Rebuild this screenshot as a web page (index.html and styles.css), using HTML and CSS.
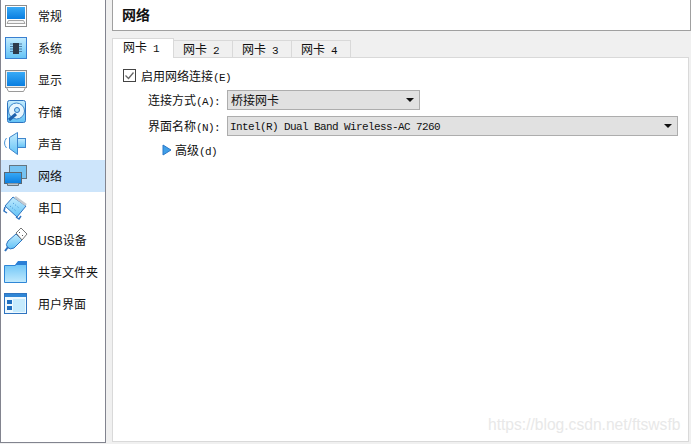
FILE: index.html
```html
<!DOCTYPE html>
<html lang="en">
<head>
    <meta charset="UTF-8">
    <title>网络</title>
    <link rel="stylesheet" href="styles.css">
</head>
<body>
<ul class="side">
    <li>
        <svg class="ico" viewBox="1 0 30 32">
            <defs>
                <linearGradient id="scr" x1="0" y1="0" x2="0" y2="1"><stop offset="0" stop-color="#38aaf6"/><stop offset="1" stop-color="#0a7ee0"/></linearGradient>
                <linearGradient id="lit" x1="0" y1="0" x2="0" y2="1"><stop offset="0" stop-color="#c4ecfe"/><stop offset="1" stop-color="#62c2f6"/></linearGradient>
                <linearGradient id="fold" x1="0" y1="0" x2="0" y2="1"><stop offset="0" stop-color="#62c0f6"/><stop offset="1" stop-color="#c2eafd"/></linearGradient>
            </defs>
            <rect x="5.500" y="5.500" width="21" height="21" fill="#fff" stroke="#8c8c8c"/>
            <rect x="7" y="7" width="18" height="12" fill="url(#scr)"/>
            <path d="M8.500 20.500h15l1.500 3H7z" fill="#f4f4f4" stroke="#a5a5a5"/>
        </svg>
        <span>常规</span>
    </li>
    <li>
        <svg class="ico" viewBox="1 0 30 32">
            <rect x="5.500" y="5.500" width="21" height="21" fill="url(#lit)" stroke="#3a7fd0"/>
            <rect x="13" y="11" width="6" height="11" fill="#2e3a4a"/>
            <path d="M10 12h3M10 14.500h3M10 17h3M10 19.500h3M19 12h3M19 14.500h3M19 17h3M19 19.500h3" stroke="#4a7ba5"/>
        </svg>
        <span>系统</span>
    </li>
    <li>
        <svg class="ico" viewBox="1 0 30 32">
            <rect x="5.500" y="6.500" width="21" height="17" fill="#eee" stroke="#8c8c8c"/>
            <rect x="7" y="8" width="18" height="14" fill="url(#scr)"/>
            <path d="M6.500 23.500h19l-2 4h-15z" fill="#fff" stroke="#9a9a9a"/>
        </svg>
        <span>显示</span>
    </li>
    <li>
        <svg class="ico" viewBox="1 0 30 32">
            <rect x="7.500" y="4.500" width="18" height="22" rx="2" fill="url(#lit)" stroke="#2f74c0"/>
            <circle cx="16.500" cy="15" r="8" fill="#e6f5fd" stroke="#3a86cc"/>
            <circle cx="17" cy="14" r="2.500" fill="#a5dcf8" stroke="#2f74c0"/>
            <path d="M9 24l7-6" stroke="#1f62ad" stroke-width="3"/>
        </svg>
        <span>存储</span>
    </li>
    <li>
        <svg class="ico" viewBox="1 0 30 32">
            <path d="M9.500 9.500l8-5v22l-8-6z" fill="url(#lit)" stroke="#3f86cc"/>
            <rect x="17.500" y="10.500" width="8" height="9" fill="url(#lit)" stroke="#3f86cc"/>
            <path d="M6.500 10q-4 5 0 10" fill="none" stroke="#4a94d6"/>
        </svg>
        <span>声音</span>
    </li>
    <li class="on">
        <svg class="ico" viewBox="1 0 30 32">
            <rect x="9.500" y="5.500" width="17" height="13" fill="#76c3f2" stroke="#66757f"/>
            <rect x="4.500" y="12.500" width="17" height="11" fill="url(#scr)" stroke="#5a6874"/>
            <path d="M7.500 23.500v2h11v-2" fill="#b8c6d0" stroke="#66757f"/>
        </svg>
        <span>网络</span>
    </li>
    <li>
        <svg class="ico" viewBox="1 0 30 32">
            <path d="M5 14L13 5l13 9-9 11z" fill="url(#lit)" stroke="#2f74c0"/>
            <path d="M15 5l11 8" stroke="#c4cad0" stroke-width="2.500"/>
            <path d="M5 15l-1 4 3 2M16 25l3 2 2-3" fill="none" stroke="#2f74c0" stroke-width="1.500"/>
            <path d="M10 14l6 5M13 11l6 5" stroke="#3a8ad0" stroke-dasharray="1 2"/>
        </svg>
        <span>串口</span>
    </li>
    <li>
        <svg class="ico" viewBox="1 0 30 32">
            <path d="M8 17l8-7 6 6-8 8q-4 2-6.500-.500t.500-6.500z" fill="url(#lit)" stroke="#2f74c0"/>
            <path d="M16 9l5-5 6 6-5 6z" fill="#fff" stroke="#777"/>
            <path d="M19 9l1-1M22 12l1-1" stroke="#555"/>
            <path d="M8 23l-3 4" stroke="#2f74c0" stroke-width="2"/>
        </svg>
        <span>USB设备</span>
    </li>
    <li>
        <svg class="ico" viewBox="1 0 30 32">
            <path d="M4.500 26.500V9.500h11l3-4h8v21z" fill="url(#fold)" stroke="#2f86d6"/>
            <path d="M15 9l3-4h9v4z" fill="#2a7fd6"/>
        </svg>
        <span>共享文件夹</span>
    </li>
    <li>
        <svg class="ico" viewBox="1 0 30 32">
            <rect x="4.500" y="5.500" width="22" height="20" fill="#eef9ff" stroke="#2f74c0"/>
            <rect x="5" y="6" width="21" height="3" fill="#2f86d6"/>
            <rect x="7" y="12" width="5" height="4" fill="#1f6fc0"/>
            <rect x="7" y="18" width="5" height="4" fill="#1f6fc0"/>
            <rect x="13" y="11" width="12" height="13" fill="#c6ebfd"/>
        </svg>
        <span>用户界面</span>
    </li>
</ul>

<div class="main">
    <h1 class="head">网络</h1>

    <div class="tabs">
        <div class="tab active">网卡<i> 1</i></div>
        <div class="tab">网卡<i> 2</i></div>
        <div class="tab">网卡<i> 3</i></div>
        <div class="tab">网卡<i> 4</i></div>
    </div>

    <div class="page">
        <div class="check">
            <svg class="box" viewBox="0 0 13 13"><rect x="0.500" y="0.500" width="12" height="12" fill="#fff" stroke="#444"/><path d="M2.500 6.500l3 3 5-6" fill="none" stroke="#666" stroke-width="1.300"/></svg>
            <span>启用网络连接<i>(E)</i></span>
        </div>
        <div class="form">
            <label>连接方式<i>(A):</i></label>
            <div class="combo short"><span>桥接网卡</span><b></b></div>
            <label>界面名称<i>(N):</i></label>
            <div class="combo"><span class="mono"><i>Intel(R) Dual Band Wireless-AC 7260</i></span><b></b></div>
        </div>
        <div class="more">
            <svg class="arrow" viewBox="0 0 10 12"><path d="M1 1l8 5-8 5z" fill="#3f9fe8" stroke="#2a78c8"/></svg>
            <span>高级<i>(d)</i></span>
        </div>
    </div>
</div>

<div class="mark">https://blog.csdn.net/ftswsfb</div>
</body>
</html>
```
FILE: styles.css
```css
* {
    margin: 0;
    padding: 0;
    box-sizing: border-box;
}

body {
    width: 691px;
    height: 444px;
    display: flex;
    align-items: flex-start;
    overflow: hidden;
    background: #f0f0f0;
    font-family: "Liberation Sans", "Noto Sans CJK SC", sans-serif;
    font-size: 12px;
    color: #111;
}

i {
    font-style: normal;
    font-family: "Liberation Mono", "Noto Sans CJK SC", monospace;
    font-size: 11px;
    letter-spacing: -0.600px;
    white-space: pre;
}

.side {
    width: 106px;
    height: 443px;
    flex: none;
    background: #fff;
    border: 1px solid #82848f;
    border-top: 0;
    list-style: none;
}

.side li {
    height: 32px;
    display: flex;
    align-items: center;
    gap: 7px;
}

.side li span {
    padding-bottom: 2px;
}

.side li.on {
    background: #cde5fb;
}

.ico {
    width: 30px;
    height: 32px;
    flex: none;
}

.main {
    width: 579px;
    margin-left: 6px;
}

.head {
    height: 31px;
    padding: 7px 0 0 9px;
    width: 579px;
    background: #fff;
    border: 1px solid #a0a0a0;
    border-top: 0;
    font-size: 14px;
    line-height: 17px;
    font-weight: bold;
}

.tabs {
    display: flex;
    align-items: flex-end;
    height: 27px;
    position: relative;
    z-index: 1;
    margin-bottom: -1px;
}

.tab {
    width: 60px;
    height: 18px;
    margin-left: -1px;
    padding-right: 4px;
    text-align: center;
    line-height: 18px;
    background: #f0f0f0;
    border: 1px solid #d9d9d9;
}

.tab:first-child {
    margin-left: 0;
}

.tab.active {
    width: 62px;
    height: 20px;
    line-height: 18px;
    background: #fff;
    border-bottom: 0;
}

.page {
    width: 577px;
    height: 385px;
    background: #fff;
    border: 1px solid #d9d9d9;
    padding: 10px 0 0 10px;
}

.check {
    display: flex;
    align-items: center;
    gap: 5px;
    height: 14px;
}

.box {
    width: 13px;
    height: 13px;
}

.form {
    display: grid;
    grid-template-columns: 97px 451px;
    column-gap: 7px;
    row-gap: 6px;
    align-items: center;
    margin-top: 8px;
}

.form label {
    text-align: right;
    padding-bottom: 1px;
}

.combo {
    height: 20px;
    display: flex;
    align-items: center;
    justify-content: space-between;
    padding: 0 5px 0 3px;
    background: #e1e1e1;
    border: 1px solid #adadad;
}

.combo.short {
    width: 193px;
}

.combo span {
    padding-bottom: 1px;
}

.combo .mono {
    margin-left: -1px;
}

.combo b {
    width: 0;
    height: 0;
    border: 4px solid transparent;
    border-top: 4px solid #111;
    border-bottom: 0;
}

.more {
    display: flex;
    align-items: center;
    gap: 3px;
    margin: 5px 0 0 39px;
}

.arrow {
    width: 10px;
    height: 12px;
}

.mark {
    position: absolute;
    left: 488px;
    top: 416px;
    font-size: 15.600px;
    line-height: 18px;
    color: #e8e8e8;
}
```
